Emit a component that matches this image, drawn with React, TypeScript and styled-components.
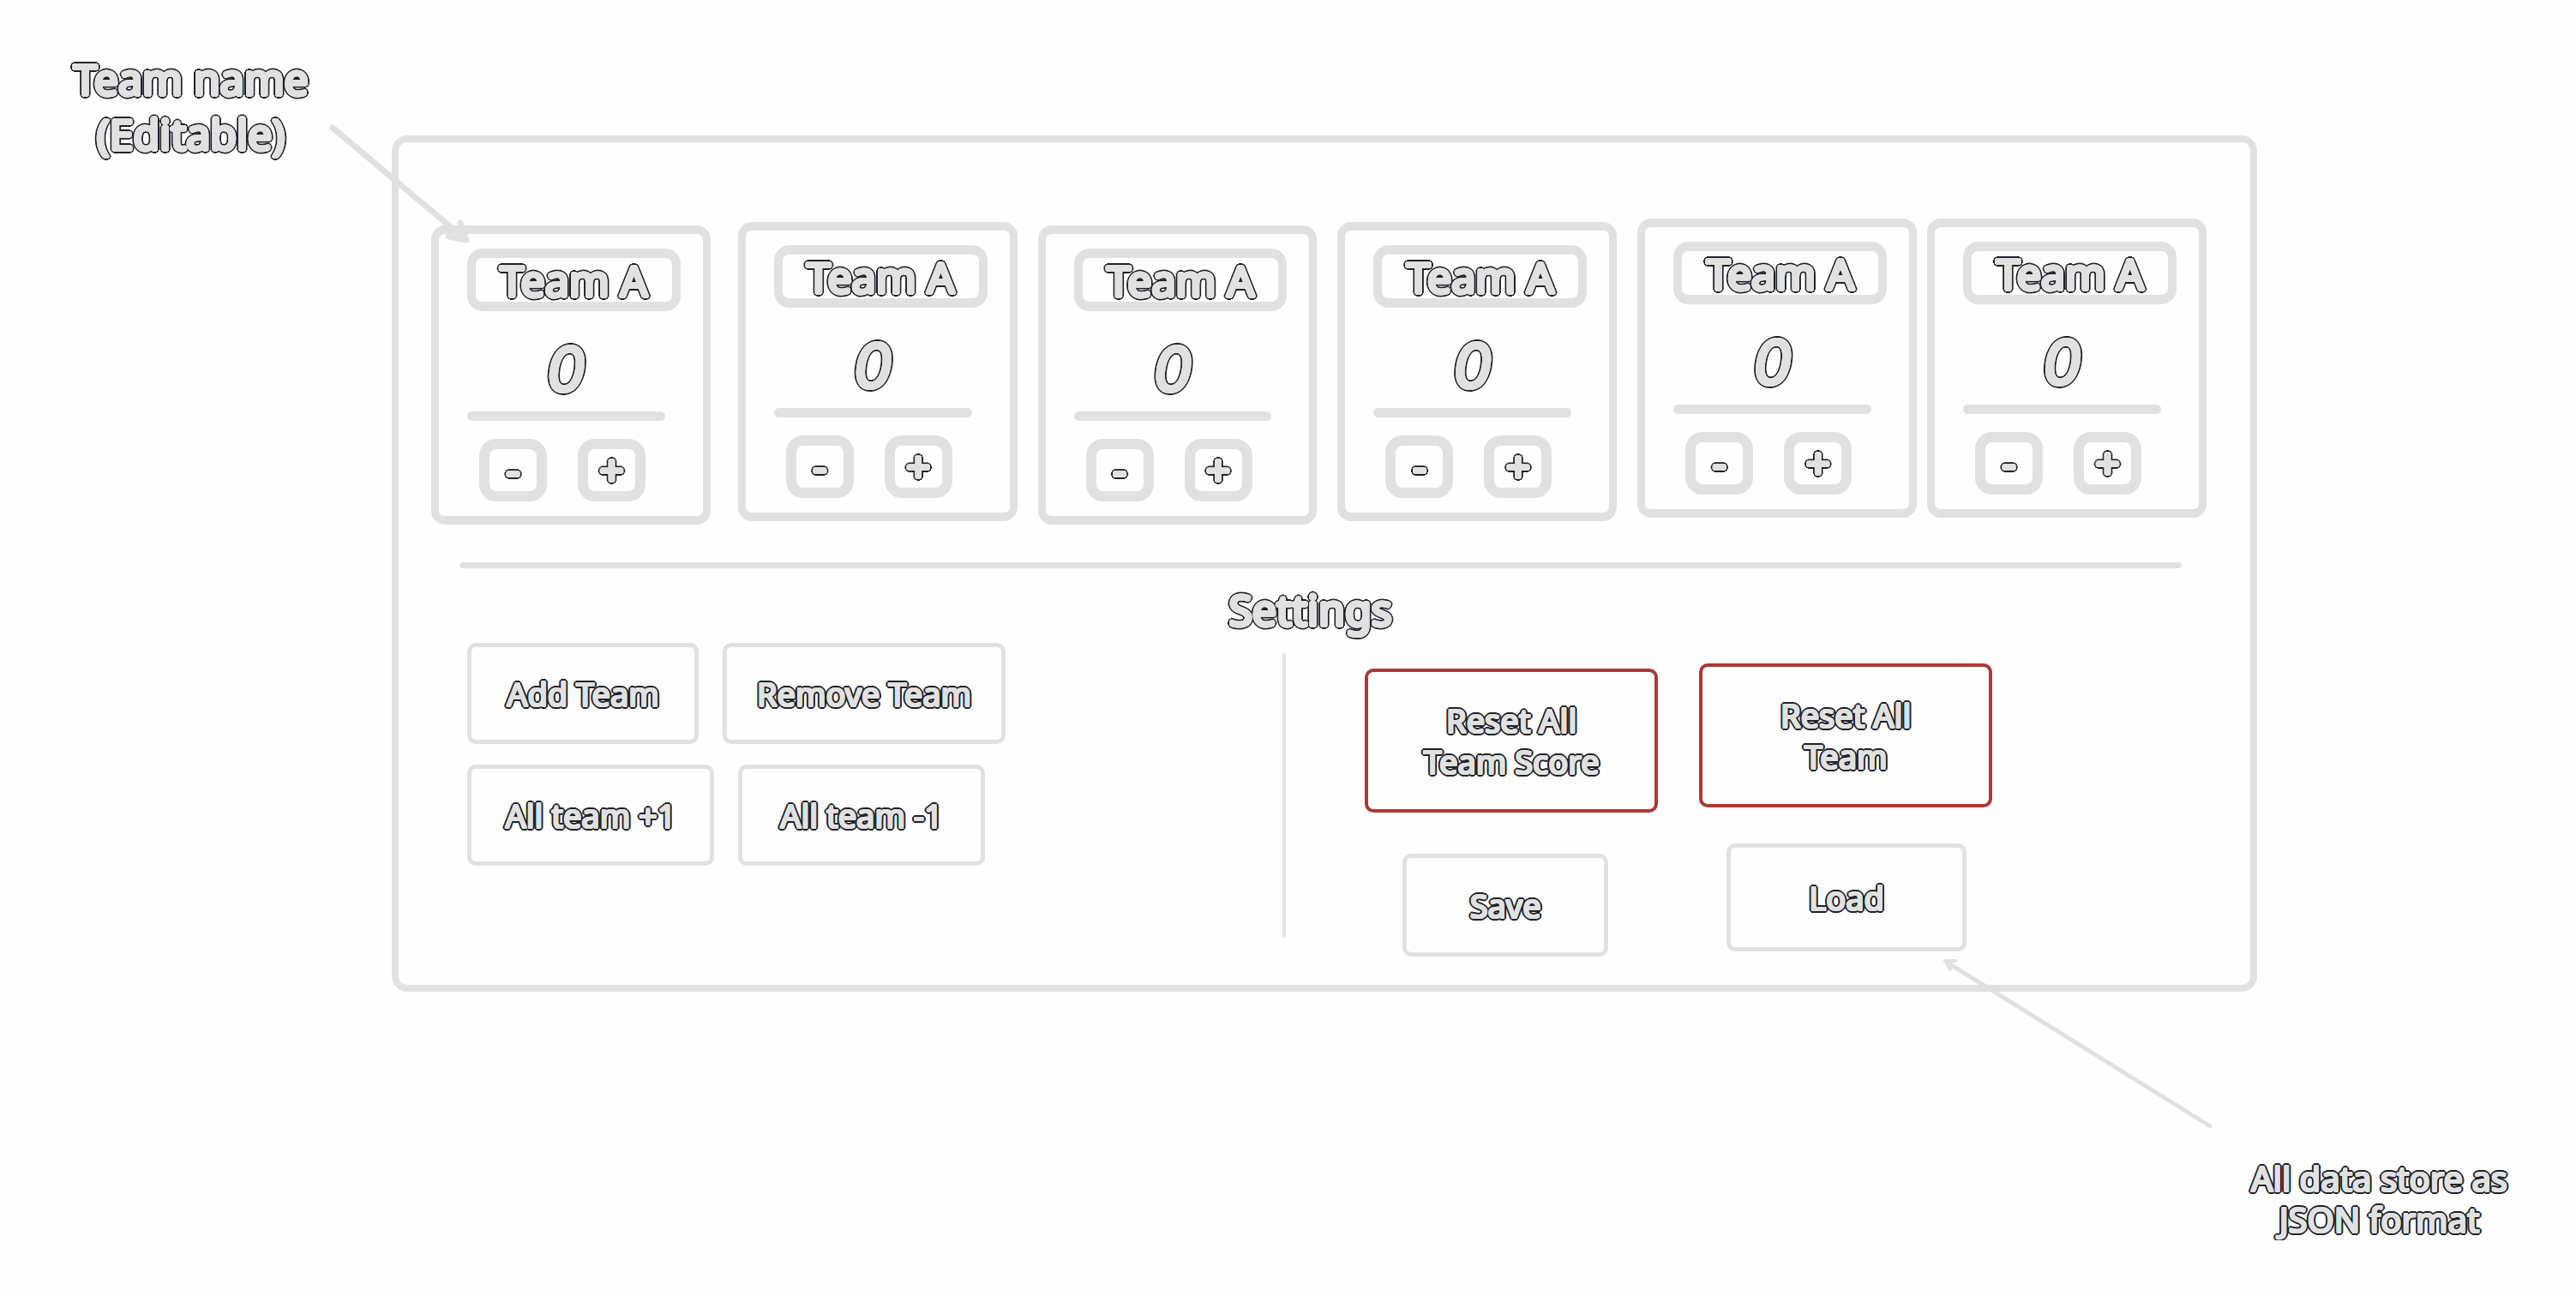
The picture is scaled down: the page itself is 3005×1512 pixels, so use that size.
import React, { useState } from "react";
import styled, { createGlobalStyle, css } from "styled-components";

const INK = "#e1e1e1";
const EDGE = "#1e2228";
const PAPER = "#fefefe";
const DANGER = "#a93b36";

const GlobalStyle = createGlobalStyle`
  *, *::before, *::after { box-sizing: border-box; }
  body {
    margin: 0;
    background: ${PAPER};
    color: ${INK};
    font-family: "Noto Sans", "Open Sans", sans-serif;
  }
`;

/* Marker lettering: a thick light stroke with a thin dark rim around it. */
const ring = (points: number[][], color: string) =>
  points.map(([x, y]) => `${x}px ${y}px 0 ${color}`).join(", ");

const RING_1 = [[1, 0], [-1, 0], [0, 1], [0, -1], [1, 1], [-1, 1], [1, -1], [-1, -1]];
const RING_2 = [
  [2, 0], [-2, 0], [0, 2], [0, -2],
  [2, 1], [-2, 1], [2, -1], [-2, -1],
  [1, 2], [-1, 2], [1, -2], [-1, -2],
];
const RING_3 = [
  [3, 0], [-3, 0], [0, 3], [0, -3],
  [3, 1], [-3, 1], [3, -1], [-3, -1],
  [1, 3], [-1, 3], [1, -3], [-1, -3],
  [2, 2], [-2, 2], [2, -2], [-2, -2],
];
const RING_4 = [
  [4, 0], [-4, 0], [0, 4], [0, -4],
  [3, 2], [-3, 2], [3, -2], [-3, -2],
  [2, 3], [-2, 3], [2, -3], [-2, -3],
];

const smallLettering = css`
  font-family: inherit;
  font-size: 38px;
  line-height: 48px;
  font-weight: 400;
  color: ${INK};
  text-shadow: ${ring(RING_1, INK)}, ${ring(RING_2, EDGE)}, ${ring(RING_3, EDGE)};
`;

const largeLettering = css`
  font-family: inherit;
  font-size: 50px;
  line-height: 64px;
  font-weight: 400;
  color: ${INK};
  text-shadow: ${ring(RING_2, INK)}, ${ring(RING_3, EDGE)}, ${ring(RING_4, EDGE)};
`;

const Page = styled.main`
  display: grid;
  grid-template-columns: 457px minmax(0, 1fr) 372px;
`;

const NameNote = styled.p`
  ${largeLettering}
  margin: 0;
  padding: 60px 12px 0 0;
  text-align: center;
`;

const DataNote = styled.p`
  ${smallLettering}
  font-size: 40px;
  grid-column: 1 / -1;
  justify-self: end;
  margin: 194px 80px 0 0;
  text-align: center;
`;

const Panel = styled.section`
  position: relative;
  margin-top: 158px;
  padding: 89px 0 33px;
  border: 8px solid ${INK};
  border-radius: 18px;
`;

const NameArrow = styled.svg`
  position: absolute;
  left: -88px;
  top: -28px;
  pointer-events: none;
`;

const DataArrow = styled.svg`
  position: absolute;
  right: 32px;
  bottom: -172px;
  pointer-events: none;
`;

const Teams = styled.div`
  display: flex;
  align-items: flex-start;
  padding: 0 51px 0 38px;
`;

const Card = styled.article<{ $gap: number; $drop: number }>`
  flex: 1;
  min-width: 0;
  margin: ${(p) => p.$drop}px 0 0 ${(p) => p.$gap}px;
  padding: 17px 26px 17px 33px;
  border: solid ${INK};
  border-width: 10px 9px;
  border-radius: 16px;
`;

const NameInput = styled.input`
  ${largeLettering}
  display: block;
  width: 100%;
  height: 73px;
  padding: 0;
  border: solid ${INK};
  border-width: 11px 10px;
  border-radius: 18px;
  background: transparent;
  text-align: center;
  outline: none;
`;

const CardBody = styled.div`
  padding-right: 18px;
`;

const Score = styled.output`
  ${largeLettering}
  display: block;
  margin-top: 28px;
  font-family: Inter, "Noto Sans", sans-serif;
  font-size: 70px;
  line-height: 80px;
  font-style: italic;
  text-align: center;
`;

const ScoreLine = styled.hr`
  height: 11px;
  margin: 9px 0 21px;
  border: 0;
  border-radius: 6px;
  background: ${INK};
`;

const Steps = styled.div`
  display: flex;
  gap: 36px;
  padding-left: 14px;
`;

const StepButton = styled.button`
  ${largeLettering}
  width: 79px;
  height: 73px;
  padding: 0 0 4px;
  border: 12px solid ${INK};
  border-radius: 20px;
  background: transparent;
  line-height: 44px;
  text-align: center;
`;

const Divider = styled.hr`
  height: 7px;
  margin: 44px 80px 16px 71px;
  border: 0;
  border-radius: 4px;
  background: ${INK};
`;

const Heading = styled.h2`
  ${largeLettering}
  margin: 0;
  padding-right: 33px;
  text-align: center;
`;

const Settings = styled.div`
  display: grid;
  grid-template-columns: 11fr 4px 12fr;
  margin-top: 7px;
`;

const TeamActions = styled.div`
  display: flex;
  flex-direction: column;
  gap: 24px;
  padding-left: 80px;
`;

const ActionRow = styled.div`
  display: flex;
  gap: 28px;
`;

const Separator = styled.div`
  margin: 12px 0 22px;
  border-radius: 2px;
  background: ${INK};
`;

const DataActions = styled.div`
  display: flex;
  gap: 48px;
  padding-left: 92px;
`;

const ActionColumn = styled.div<{ $top: number; $gap: number }>`
  display: flex;
  flex-direction: column;
  align-items: flex-start;
  gap: ${(p) => p.$gap}px;
  padding-top: ${(p) => p.$top}px;
`;

const ActionButton = styled.button<{
  $width: number;
  $height?: number;
  $indent?: number;
  $danger?: boolean;
}>`
  ${smallLettering}
  width: ${(p) => p.$width}px;
  height: ${(p) => p.$height ?? 118}px;
  margin-left: ${(p) => p.$indent ?? 0}px;
  padding: 0;
  border: solid ${(p) => (p.$danger ? DANGER : INK)};
  border-width: ${(p) => (p.$danger ? "4px" : "5px")};
  border-radius: 10px;
  background: transparent;
  text-align: center;
`;

/* The cards are scattered a little, as if put down by hand. */
const SCATTER = [
  { gap: 0, drop: 8 },
  { gap: 32, drop: 4 },
  { gap: 24, drop: 8 },
  { gap: 24, drop: 4 },
  { gap: 24, drop: 0 },
  { gap: 12, drop: 0 },
];

function TeamCard({ gap, drop, index }: { gap: number; drop: number; index: number }) {
  const [name, setName] = useState("Team A");
  const [score, setScore] = useState(0);
  return (
    <Card $gap={gap} $drop={drop}>
      <NameInput
        aria-label={`Team ${index + 1} name`}
        value={name}
        onChange={(e) => setName(e.target.value)}
      />
      <CardBody>
        <Score>{score}</Score>
        <ScoreLine />
        <Steps>
          <StepButton type="button" onClick={() => setScore(score - 1)}>-</StepButton>
          <StepButton type="button" onClick={() => setScore(score + 1)}>+</StepButton>
        </Steps>
      </CardBody>
    </Card>
  );
}

export default function App() {
  return (
    <>
      <GlobalStyle />
      <Page>
        <NameNote>
          Team name
          <br />
          (Editable)
        </NameNote>
        <Panel>
          <Teams>
            {SCATTER.map((s, i) => (
              <TeamCard key={i} index={i} gap={s.gap} drop={s.drop} />
            ))}
          </Teams>
          <Divider />
          <Heading>Settings</Heading>
          <Settings>
            <TeamActions>
              <ActionRow>
                <ActionButton type="button" $width={270}>Add Team</ActionButton>
                <ActionButton type="button" $width={330}>Remove Team</ActionButton>
              </ActionRow>
              <ActionRow>
                <ActionButton type="button" $width={288}>All team +1</ActionButton>
                <ActionButton type="button" $width={288}>All team -1</ActionButton>
              </ActionRow>
            </TeamActions>
            <Separator />
            <DataActions>
              <ActionColumn $top={30} $gap={48}>
                <ActionButton type="button" $width={342} $height={168} $danger>
                  Reset All
                  <br />
                  Team Score
                </ActionButton>
                <ActionButton type="button" $width={240} $height={120} $indent={44}>
                  Save
                </ActionButton>
              </ActionColumn>
              <ActionColumn $top={24} $gap={42}>
                <ActionButton type="button" $width={342} $height={168} $danger>
                  Reset All
                  <br />
                  Team
                </ActionButton>
                <ActionButton type="button" $width={280} $height={126} $indent={32}>
                  Load
                </ActionButton>
              </ActionColumn>
            </DataActions>
          </Settings>
          <NameArrow width="180" height="160" viewBox="0 0 180 160" fill="none" aria-hidden="true">
            <path d="M11 11 L167 142" stroke={INK} strokeWidth="7" strokeLinecap="round" />
            <path
              d="M160 122 L167 142 L146 138"
              stroke={INK}
              strokeWidth="7"
              strokeLinecap="round"
              strokeLinejoin="round"
            />
          </NameArrow>
          <DataArrow width="333" height="220" viewBox="0 0 333 220" fill="none" aria-hidden="true">
            <path d="M10 21 L320 214" stroke={INK} strokeWidth="5" />
            <path
              d="M21 20 L9 20 L15 30"
              stroke={INK}
              strokeWidth="4"
              strokeLinecap="round"
              strokeLinejoin="round"
            />
          </DataArrow>
        </Panel>
        <DataNote>
          All data store as
          <br />
          JSON format
        </DataNote>
      </Page>
    </>
  );
}
